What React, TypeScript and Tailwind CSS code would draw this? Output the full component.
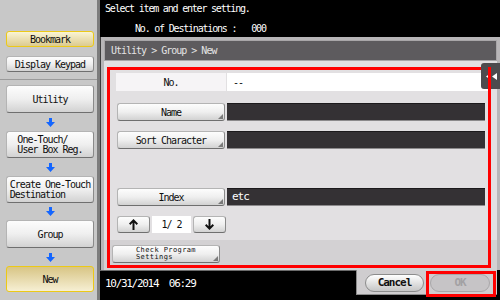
import React from "react";

const mono = "font-['DejaVu_Sans_Mono','Liberation_Mono',monospace]";

const grayBtn =
  "bg-linear-to-b from-[#fdfdfd] via-[#efefef] to-[#d2d2d2] border border-[#b4b4b4] border-b-[#6f6f6f] border-r-[#8a8a8a] rounded-[3px]";

function BlueArrow() {
  return (
    <svg width="9" height="9" viewBox="0 0 9 9">
      <path d="M3 0 H6 V4 H9 L4.5 9 L0 4 H3 Z" fill="#1466ff" />
    </svg>
  );
}

function Corner() {
  return (
    <svg width="5" height="5" viewBox="0 0 5 5" className="absolute right-[1px] bottom-[1px]">
      <polygon points="5,0 5,5 0,5" fill="#7a7a7a" />
    </svg>
  );
}

function FormBtn({ label }: { label: string }) {
  return (
    <div className={`relative w-[108px] h-full flex items-center justify-center ${grayBtn} text-[10px] tracking-[-1px] text-[#0e0e0e]`}>
      {label}
      <Corner />
    </div>
  );
}

function Field({ children }: { children?: React.ReactNode }) {
  return (
    <div className="flex-1 h-full bg-[#343134] border-t border-[#1c1a1c] border-b border-b-[#8c8a8c] flex items-center pl-[5px] text-white text-[11px] tracking-[-1px]">
      {children}
    </div>
  );
}

export default function App() {
  return (
    <div className={`w-[500px] h-[300px] flex bg-black overflow-hidden relative ${mono}`}>
      {/* Left panel */}
      <div className="w-[100px] h-full bg-[#c8c8c8] border-r-[3px] border-[#7c7c7c] flex flex-col text-[10px] tracking-[-1px] text-[#0e0e0e]">
        <div className="h-[80px] border-b border-[#9a9a9a] flex flex-col pt-[31px] pl-[6px] gap-[9px]">
          <div className="w-[88px] h-[16px] rounded-[3px] border-[1.5px] border-[#ecc917] bg-linear-to-b from-[#faf4d4] to-[#dccb8f] flex items-center justify-center">
            Bookmark
          </div>
          <div className={`w-[88px] h-[16px] ${grayBtn} flex items-center justify-center`}>Display Keypad</div>
        </div>
        <div className="flex flex-col pl-[6px] pt-[5px]">
          <div className={`w-[88px] h-[28px] ${grayBtn} flex items-center justify-center`}>Utility</div>
          <div className="w-[88px] h-[18px] flex items-center justify-center"><BlueArrow /></div>
          <div className={`w-[88px] h-[27px] ${grayBtn} flex items-center justify-center leading-[10px]`}>
            <div>One-Touch/<br />User Box Reg.</div>
          </div>
          <div className="w-[88px] h-[18px] flex items-center justify-center"><BlueArrow /></div>
          <div className={`w-[88px] h-[27px] ${grayBtn} flex items-center justify-center leading-[10px]`}>
            <div>Create One-Touch<br />Destination</div>
          </div>
          <div className="w-[88px] h-[17px] flex items-center justify-center"><BlueArrow /></div>
          <div className={`w-[88px] h-[28px] ${grayBtn} flex items-center justify-center`}>Group</div>
          <div className="w-[88px] h-[18px] flex items-center justify-center"><BlueArrow /></div>
          <div className="w-[88px] h-[26px] rounded-[3px] border-[1.5px] border-[#ecc917] bg-linear-to-b from-[#d8c585] to-[#f6efd3] flex items-center justify-center">
            New
          </div>
        </div>
      </div>

      {/* Right column */}
      <div className="flex-1 h-full flex flex-col">
        {/* Top bar */}
        <div className="h-[37px] flex flex-col pt-[3px] text-[10px] tracking-[-1.2px] text-white leading-[12px]">
          <div className="pl-[5px]">Select item and enter setting.</div>
          <div className="mt-[8px] pl-[35px] flex">
            <span>No. of Destinations :</span>
            <span className="ml-[15px]">000</span>
          </div>
        </div>

        {/* Body */}
        <div className="h-[233px] flex flex-col bg-[#b8b6b8] pt-[3px] px-[3px] border-l border-[#3c3c3c]">
          <div className="h-[21px] bg-[#5d5b5e] border border-[#a8a6a8] flex items-center pl-[6px] text-[10px] tracking-[-1px] text-[#e4e4e4]">
            Utility &gt; Group &gt; New
          </div>
          <div className="flex-1 flex flex-col bg-[linear-gradient(to_bottom,#e2e0e2_179px,#d3d1d3_179px)]">
            <div className="ml-[3px] mt-[6px] mr-[6px] mb-[2px] flex-1 border-[3px] border-[#ff0000] flex flex-col text-[10px] tracking-[-1px] text-[#0e0e0e]">
              {/* No. */}
              <div className="mt-[3px] h-[18px] flex">
                <div className="ml-[6px] w-[110px] h-full bg-[#f6f4f6] flex items-center justify-center">No.</div>
                <div className="ml-[1px] flex-1 h-full bg-white flex items-center pl-[6px]">--</div>
              </div>
              {/* Name */}
              <div className="mt-[12px] h-[18px] flex pl-[7px] pr-[3px] gap-[2px]">
                <FormBtn label="Name" />
                <Field />
              </div>
              {/* Sort Character */}
              <div className="mt-[10px] h-[18px] flex pl-[7px] pr-[3px] gap-[2px]">
                <FormBtn label="Sort Character" />
                <Field />
              </div>
              {/* Index */}
              <div className="mt-[39px] h-[18px] flex pl-[7px] pr-[3px] gap-[2px]">
                <FormBtn label="Index" />
                <Field>etc</Field>
              </div>
              {/* Pager */}
              <div className="mt-[10px] h-[17px] flex pl-[7px] gap-[2px]">
                <div className={`w-[33px] h-full ${grayBtn} flex items-center justify-center`}>
                  <svg width="9" height="11" viewBox="0 0 9 11">
                    <path d="M4.5 0 L9 4.5 L7.6 5.9 L5.5 3.8 V11 H3.5 V3.8 L1.4 5.9 L0 4.5 Z" fill="#111" />
                  </svg>
                </div>
                <div className="w-[39px] h-full bg-white flex items-center justify-center text-[10px]">1/&nbsp;2</div>
                <div className={`w-[33px] h-full ${grayBtn} flex items-center justify-center`}>
                  <svg width="9" height="11" viewBox="0 0 9 11">
                    <path d="M4.5 11 L9 6.5 L7.6 5.1 L5.5 7.2 V0 H3.5 V7.2 L1.4 5.1 L0 6.5 Z" fill="#111" />
                  </svg>
                </div>
              </div>
              {/* Check Program Settings */}
              <div className="mt-[12px] h-[18px] flex pl-[2px]">
                <div className={`relative w-[108px] h-full ${grayBtn} flex items-center justify-center`}>
                  <div className="text-[7px] leading-[7px] tracking-[0.4px]">
                    Check Program<br />Settings
                  </div>
                  <Corner />
                </div>
              </div>
            </div>
          </div>
        </div>

        {/* Bottom row */}
        <div className="h-[30px] flex">
          <div className="w-[256px] h-full bg-black border-t border-[#6a6a6a] flex items-center pl-[5px] pb-[2px] text-white text-[11px] tracking-[-1.3px]">
            10/31/2014&nbsp;&nbsp;06:29
          </div>
          <div className="flex-1 h-full flex flex-col">
            <div className="w-[141px] h-[25px] bg-[#cfcdcf] border-l border-b border-[#8a8a8a] flex items-start pl-[8px] gap-[2px]">
              <div className="mt-[4px] w-[59px] h-[18px] rounded-full bg-linear-to-b from-[#ffffff] to-[#c6c6c6] border border-[#8c8c8c] flex items-center justify-center text-[11px] tracking-[-1px] text-[#111] font-bold">
                Cancel
              </div>
              <div className="mt-[1px] w-[70px] h-[26px] border-[3px] border-[#ff0000] pl-[1px] flex items-start">
                <div className="w-[60px] h-[18px] rounded-full bg-[#c6c4c6] border border-[#a9a7a9] flex items-center justify-center text-[11px] tracking-[-1px] text-[#a3a1a3] font-bold">
                  OK
                </div>
              </div>
            </div>
          </div>
        </div>
      </div>

      {/* Side tab */}
      <div className="absolute left-[481px] top-[63px] w-[19px] h-[26px] bg-[#4d4b4e] rounded-l-[3px] flex items-center justify-end pr-[3px]">
        <svg width="11" height="7" viewBox="0 0 11 7">
          <polygon points="5,0 5,7 0,3.5" fill="#fff" />
          <polygon points="11,0 11,7 6,3.5" fill="#fff" />
        </svg>
      </div>
      {/* red line over tab */}
      <div className="absolute left-[488px] top-[67px] w-[3px] h-[22px] bg-[#ff0000]" />
    </div>
  );
}
